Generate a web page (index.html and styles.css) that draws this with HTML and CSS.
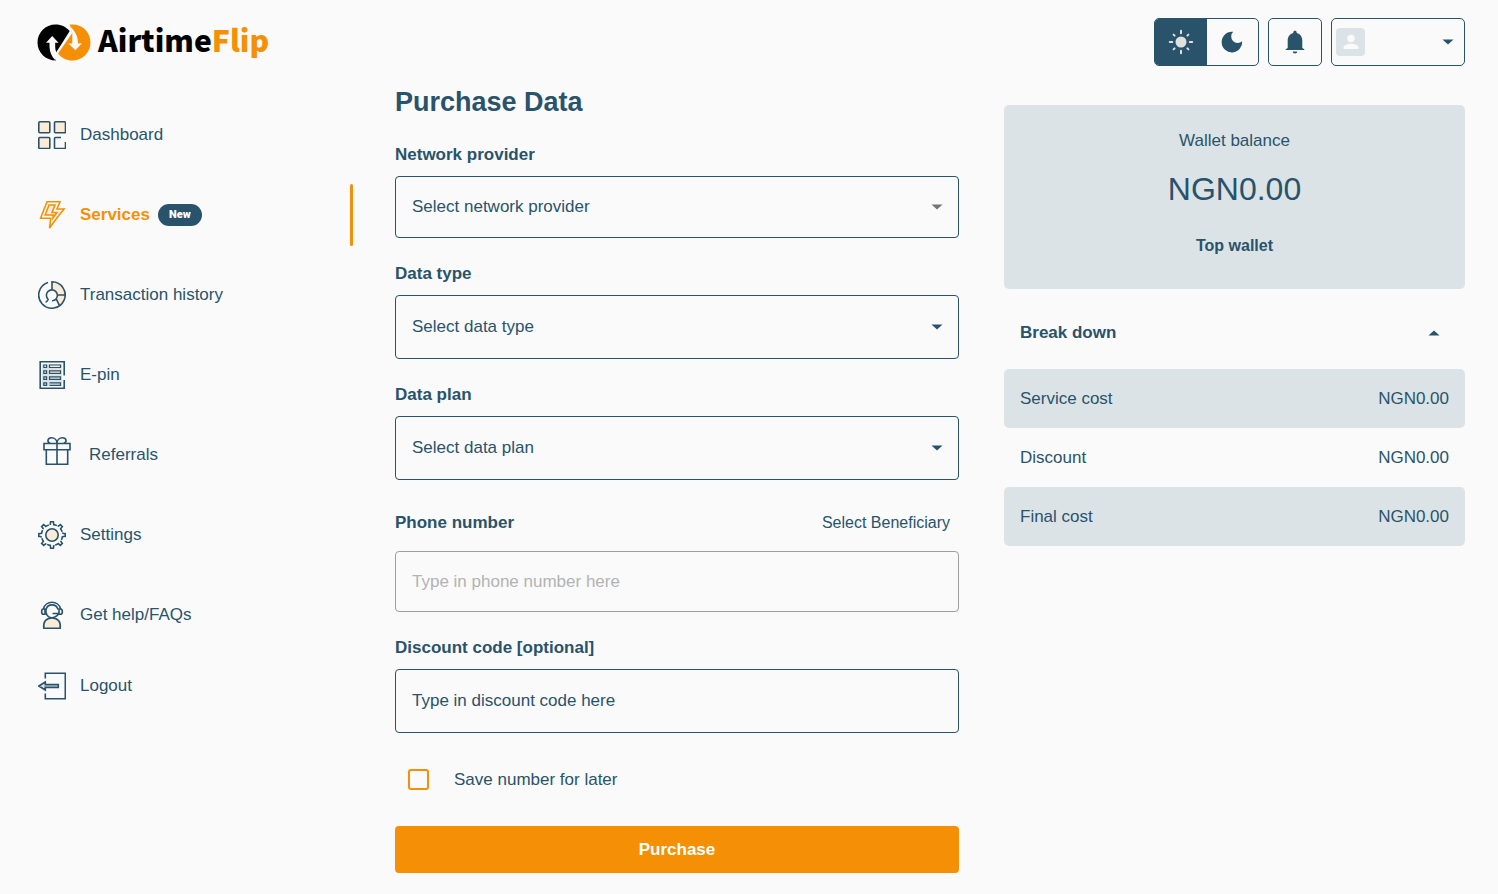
FILE: index.html
```html
<!DOCTYPE html>
<html lang="en">
<head>
    <meta charset="UTF-8">
    <meta name="viewport" content="width=device-width, initial-scale=1.0">
    <title>AirtimeFlip - Purchase Data</title>
    <link rel="stylesheet" href="styles.css">
</head>
<body>
    <header class="topbar">
        <a class="logo" href="#">
            <svg width="54" height="37" viewBox="0 0 54 37">
                <path fill="#000" d="M18.500 .5c6 0 11 2.600 14.200 6.600l-1.200 2L17.500 31l1.500 5.500C8.500 36.500.5 28.500.5 18.500S8.500.5 18.500.5z"/>
                <path fill="#f58f05" d="M32.500 .7c12-1.700 21 7 21 17.800 0 10-8 18-18 18-6 0-11-2.500-14.500-7L35 9.500c0-3-1-6.500-2.500-8.800z"/>
                <path fill="#fafafa" d="M15.200 12l6.300 6.800h-3.300v4c0 2.500.6 4.500 1.600 6.200L18.500 36.500c-3.800-4-5.800-8.500-6-13.500v-4.200H9zM38.300 26.300L31.500 19.500h3.800V9.500l-2-7C38 7 41 12 41 19.500h3.800z"/>
            </svg>
            <span class="logo-text">Airtime<span class="logo-accent">Flip</span></span>
        </a>
        <div class="tools">
            <div class="theme-toggle">
                <button class="theme-btn selected" type="button" aria-label="Light mode">
                    <svg width="26" height="26" viewBox="0 0 26 26" stroke="#e0e0e0" stroke-width="2" stroke-linecap="round">
                        <circle cx="13" cy="13" r="5.500" fill="#e0e0e0" stroke="none"/>
                        <path d="M13 1.800v2.400M13 21.800v2.400M1.800 13h2.400M21.800 13h2.400M5.600 5.600l1 1M19.400 19.400l1 1M5.600 20.400l1-1M19.400 6.600l1-1"/>
                    </svg>
                </button>
                <button class="theme-btn" type="button" aria-label="Dark mode">
                    <svg width="26" height="26" viewBox="0 0 26 26">
                        <path fill="#29536b" d="M12.800 2.800A10.300 10.300 0 1 0 23.200 12.200A6.200 6.200 0 1 1 14.200 2.800z"/>
                    </svg>
                </button>
            </div>
            <button class="icon-btn" type="button" aria-label="Notifications">
                <svg width="26" height="26" viewBox="0 0 26 26">
                    <path fill="#29536b" d="M13 24.500c1.300 0 2.300-.9 2.300-2h-4.600c0 1.100 1 2 2.300 2zM20.300 19v-7.500c0-3.700-2-6.600-5.600-7.500v-.6c0-1-.7-1.700-1.700-1.700s-1.700.7-1.700 1.700V4c-3.600.9-5.600 3.800-5.600 7.500V19l-2 1.200v.8h18.600v-.8z"/>
                </svg>
            </button>
            <button class="user-btn" type="button" aria-label="Account">
                <span class="avatar">
                    <svg width="16" height="16" viewBox="0 0 16 16" fill="#fafafa">
                        <circle cx="8" cy="4.500" r="3.700"/>
                        <path d="M.5 15v-1.500c0-2.500 5-3.700 7.500-3.700s7.500 1.200 7.500 3.700V15z"/>
                    </svg>
                </span>
                <svg class="caret" width="12" height="6" viewBox="0 0 12 6"><path d="M.5 .4h11L6 5.600z"/></svg>
            </button>
        </div>
    </header>

    <div class="layout">
        <!-- Sidebar -->
        <nav class="sidebar">
            <a class="nav-item" href="#">
                <svg class="nav-icon" width="28" height="28" viewBox="0 0 28 28">
                    <g fill="#fcebd7">
                        <rect x=".8" y=".8" width="11" height="11" rx="1"/>
                        <rect x="16.500" y=".8" width="11" height="11" rx="1"/>
                        <rect x=".8" y="16.500" width="11" height="11" rx="1"/>
                    </g>
                    <path d="M23 16.500h-5.500a1 1 0 0 0-1 1v9a1 1 0 0 0 1 1h9a1 1 0 0 0 1-1V21"/>
                </svg>
                Dashboard
            </a>
            <a class="nav-item active" href="#">
                <svg class="nav-icon" width="28" height="28" viewBox="0 0 28 28">
                    <path d="M20 15.500L11.500 27l1.300-9.700H2.600L9 .8h13l-3 7.200h7l-6 7.500"/>
                    <path fill="#fcebd7" d="M11 4h6l-3 7.500h5l-4 5.500.3-3H7.200z"/>
                </svg>
                Services
                <span class="badge">New</span>
            </a>
            <a class="nav-item" href="#">
                <svg class="nav-icon" width="28" height="28" viewBox="0 0 28 28">
                    <path fill="#fcebd7" stroke="none" d="M14 .8A13.200 13.200 0 0 1 21 25.200L17.300 18.500 19.500 14 14 8.500z"/>
                    <path d="M10 1.400A13.200 13.200 0 1 0 14 .8V8.500M19.500 14h7.700M18.500 18.300l3 6.400M8 21.500c0-1.500 2.500-1.500 2-3.300A5.500 5.500 0 1 1 18 18c-1 1.200-2 1.800-4 1.700"/>
                </svg>
                Transaction history
            </a>
            <a class="nav-item" href="#">
                <svg class="nav-icon" width="28" height="28" viewBox="0 0 28 28">
                    <path fill="#dbe2e5" stroke="none" d="M4 3h20v22H4z"/>
                    <path d="M26.200 14.500V.8h-24v26.400h24V19"/>
                    <g stroke-width="1.200">
                        <path fill="#fcebd7" d="M5.800 4h2.800v2.500H5.800zM11.500 4h11v2.500h-11zM5.800 9.800h2.800v2.500H5.800zM11.500 9.800h11v2.500h-11z"/>
                        <path d="M5.800 15.800h2.800v2.500H5.800zM11.500 15.800h11v2.500h-11zM5.800 21.800h2.800v2.500H5.800zM11.500 24.300h11v-2.500h-11"/>
                    </g>
                </svg>
                E-pin
            </a>
            <a class="nav-item" href="#">
                <svg class="nav-icon" width="37" height="37" viewBox="0 0 37 37">
                    <path d="M6 6.500h26v6.300H6zM8.300 12.800v14.400h21.400V12.800M19 6.500v20.700M19 6.500h-6.500C8.500 5 9.500.8 13.500.8c3.500 0 5.500 2.700 5.500 5.700zM19 6.500h6.500c4-1.500 3-5.700-1-5.700-3.500 0-5.500 2.700-5.500 5.700z"/>
                </svg>
                Referrals
            </a>
            <a class="nav-item" href="#">
                <svg class="nav-icon" width="28" height="28" viewBox="0 0 28 28">
                    <path id="tooth" d="M11.500 3.500l.8-.4.300-2.300h2.800l.3 2.800c1.400.2 2.400.6 3.200 1"/>
                    <use href="#tooth" transform="rotate(45 14 14)"/>
                    <use href="#tooth" transform="rotate(90 14 14)"/>
                    <use href="#tooth" transform="rotate(135 14 14)"/>
                    <use href="#tooth" transform="rotate(180 14 14)"/>
                    <use href="#tooth" transform="rotate(225 14 14)"/>
                    <use href="#tooth" transform="rotate(270 14 14)"/>
                    <use href="#tooth" transform="rotate(315 14 14)"/>
                    <circle cx="14" cy="14" r="6.200" fill="#fcebd7"/>
                </svg>
                Settings
            </a>
            <a class="nav-item" href="#">
                <svg class="nav-icon" width="28" height="28" viewBox="0 0 28 28">
                    <path d="M5.300 8A9 9 0 0 1 22.700 8M8 8.500a6.200 6.200 0 0 1 12 0M8 8.500c-.8 4 1.500 8.200 6 8.200 3.500 0 6-2.500 6.300-4.200H14.500"/>
                    <path fill="#fcebd7" d="M7 8H5.500C3 8 3 13.300 5.500 13.300H7zM21 8h1.500c2.500 0 2.500 5.300 0 5.300H21zM5.800 27.200c-.8-6 2-10.200 8.200-10.200s9 4.200 8.200 10.200z"/>
                </svg>
                Get help/FAQs
            </a>
            <a class="nav-item logout" href="#">
                <svg class="nav-icon" width="28" height="28" viewBox="0 0 28 28">
                    <path d="M7.300 6.500V1.300h20v25.500h-20v-5.300"/>
                    <path fill="#dbe2e5" d="M.8 14l6.500-4v2.600h13v2.800h-13V18z"/>
                </svg>
                Logout
            </a>
        </nav>

        <!-- Purchase form -->
        <main class="content">
            <form class="purchase-form">
                <h1 class="title">Purchase Data</h1>
                <div class="field">
                    <label for="network">Network provider</label>
                    <div class="select-box">
                        <select class="control" id="network">
                            <option>Select network provider</option>
                        </select>
                        <svg class="caret muted" width="12" height="6" viewBox="0 0 12 6"><path d="M.5 .4h11L6 5.600z"/></svg>
                    </div>
                </div>
                <div class="field">
                    <label for="data-type">Data type</label>
                    <div class="select-box">
                        <select class="control tall" id="data-type">
                            <option>Select data type</option>
                        </select>
                        <svg class="caret" width="12" height="6" viewBox="0 0 12 6"><path d="M.5 .4h11L6 5.600z"/></svg>
                    </div>
                </div>
                <div class="field">
                    <label for="data-plan">Data plan</label>
                    <div class="select-box">
                        <select class="control tall" id="data-plan">
                            <option>Select data plan</option>
                        </select>
                        <svg class="caret" width="12" height="6" viewBox="0 0 12 6"><path d="M.5 .4h11L6 5.600z"/></svg>
                    </div>
                </div>
                <div class="field">
                    <div class="label-row">
                        <label for="phone">Phone number</label>
                        <button class="text-btn" type="button">Select Beneficiary</button>
                    </div>
                    <input class="control phone" id="phone" type="tel" placeholder="Type in phone number here">
                </div>
                <div class="field">
                    <label for="discount">Discount code [optional]</label>
                    <input class="control tall" id="discount" type="text" placeholder="Type in discount code here">
                </div>
                <label class="save-row">
                    <input class="checkbox" type="checkbox">
                    Save number for later
                </label>
                <button class="submit-btn" type="submit">Purchase</button>
            </form>
        </main>

        <!-- Wallet and cost summary -->
        <aside class="summary">
            <section class="wallet">
                <p class="wallet-label">Wallet balance</p>
                <p class="wallet-amount">NGN0.00</p>
                <button class="wallet-btn" type="button">Top wallet</button>
            </section>
            <button class="breakdown-toggle" type="button" aria-expanded="true">
                Break down
                <svg class="caret" width="12" height="6" viewBox="0 0 12 6"><path d="M.5 5.600h11L6 .4z"/></svg>
            </button>
            <table class="costs">
                <tr>
                    <th>Service cost</th>
                    <td>NGN0.00</td>
                </tr>
                <tr>
                    <th>Discount</th>
                    <td>NGN0.00</td>
                </tr>
                <tr>
                    <th>Final cost</th>
                    <td>NGN0.00</td>
                </tr>
            </table>
        </aside>
    </div>
</body>
</html>
```

FILE: styles.css
```css
* {
    box-sizing: border-box;
}
body {
    margin: 0;
    background-color: #fafafa;
    color: #29536b;
    font-family: "Liberation Sans", Arial, sans-serif;
    font-size: 17px;
    line-height: 24px;
}
button, input, select {
    font: inherit;
    color: inherit;
}
button {
    padding: 0;
    border: none;
    background: none;
    cursor: pointer;
}
a {
    color: inherit;
    text-decoration: none;
}
svg {
    display: block;
    flex-shrink: 0;
}

/* Top bar */
.topbar {
    display: flex;
    justify-content: space-between;
    align-items: flex-start;
    height: 80px;
    padding: 18px 33px 0 37px;
}
.logo {
    display: flex;
    align-items: center;
    gap: 7px;
    height: 48px;
    color: #000;
}
.logo-text {
    padding-bottom: 5px;
    font-family: "Noto Sans CJK SC", "Open Sans", sans-serif;
    font-size: 30px;
    font-weight: 900;
    line-height: 43px;
}
.logo-accent {
    color: #f58f05;
}
.tools {
    display: flex;
    gap: 9px;
}
.theme-toggle, .icon-btn, .user-btn {
    height: 48px;
    border: 1px solid #29536b;
    border-radius: 5px;
}
.theme-toggle {
    display: flex;
    width: 105px;
    overflow: hidden;
}
.theme-btn, .icon-btn {
    display: flex;
    align-items: center;
    justify-content: center;
}
.theme-btn {
    flex: 1;
}
.theme-btn.selected {
    background-color: #29536b;
}
.icon-btn {
    width: 54px;
}
.user-btn {
    display: flex;
    align-items: center;
    justify-content: space-between;
    width: 134px;
    padding: 0 10px 0 4px;
}
.avatar {
    display: flex;
    align-items: center;
    justify-content: center;
    width: 29px;
    height: 28px;
    border-radius: 4px;
    background-color: #dce3e6;
}
.caret {
    fill: #29536b;
}
.caret.muted {
    fill: #757575;
}

/* Page columns */
.layout {
    display: flex;
    align-items: flex-start;
    padding-right: 33px;
}
.content {
    flex: 564;
    margin: 0 45px 0 42px;
    padding-bottom: 21px;
}
.summary {
    flex: 461;
    padding-top: 25px;
}

/* Sidebar */
.sidebar {
    display: flex;
    flex-direction: column;
    flex-shrink: 0;
    gap: 18px;
    width: 353px;
    padding: 24px 0 0 38px;
}
.nav-item {
    display: flex;
    align-items: center;
    height: 62px;
}
.nav-icon {
    margin-right: 14px;
    fill: none;
    stroke: #29536b;
    stroke-width: 1.6px;
}
.nav-item.active {
    color: #f58f05;
    font-weight: bold;
}
.nav-item.active .nav-icon {
    stroke: #f58f05;
}
.nav-item.active::after {
    content: "";
    width: 3px;
    height: 62px;
    margin-left: auto;
    border-radius: 2px;
    background-color: #f58f05;
}
.badge {
    margin-left: 8px;
    padding: 0 11px;
    border-radius: 11px;
    background-color: #29536b;
    color: #fff;
    font-family: Roboto, sans-serif;
    font-size: 11px;
    font-weight: 900;
    line-height: 22px;
}
.logout {
    margin-top: -9px;
}

/* Form */
.purchase-form {
    display: flex;
    flex-direction: column;
    gap: 23px;
}
.title {
    margin: 0 0 -5px;
    font-size: 27px;
    line-height: 44px;
}
.field {
    display: flex;
    flex-direction: column;
    gap: 8px;
}
.field label {
    font-weight: bold;
    line-height: 26px;
}
.label-row {
    display: flex;
    align-items: center;
    justify-content: space-between;
    height: 40px;
    padding-right: 9px;
}
.text-btn {
    font-size: 16px;
}
.select-box {
    position: relative;
}
.control {
    display: block;
    width: 100%;
    height: 62px;
    padding: 0 16px;
    border: 1px solid #29536b;
    border-radius: 4px;
    background: none;
    appearance: none;
}
.control.tall {
    height: 64px;
}
.control.phone {
    height: 61px;
    border-color: #9e9e9e;
}
.control::placeholder {
    color: #29536b;
    opacity: 1;
}
.control.phone::placeholder {
    color: #b3b3b3;
}
.select-box .caret {
    position: absolute;
    top: 50%;
    right: 16px;
    margin-top: -3px;
    pointer-events: none;
}
.save-row {
    display: flex;
    align-items: center;
    gap: 25px;
    height: 47px;
    padding-left: 13px;
}
.checkbox {
    width: 21px;
    height: 21px;
    margin: 0;
    border: 2px solid #f58f05;
    border-radius: 3px;
    appearance: none;
}
.checkbox:checked {
    background-color: #f58f05;
}
.submit-btn {
    height: 47px;
    border-radius: 4px;
    background-color: #f58f05;
    color: #fff;
    font-weight: bold;
}

/* Wallet */
.wallet {
    display: flex;
    flex-direction: column;
    align-items: center;
    padding: 24px 16px 31px;
    border-radius: 5px;
    background-color: #dce3e6;
}
.wallet p {
    margin: 0;
}
.wallet .wallet-amount {
    margin: 16px 0 24px;
    font-size: 32px;
    line-height: 41px;
}
.wallet-btn {
    font-size: 16px;
    font-weight: bold;
    line-height: 24px;
}
.breakdown-toggle {
    display: flex;
    align-items: center;
    justify-content: space-between;
    width: 100%;
    height: 80px;
    padding: 7px 25px 0 16px;
    font-weight: bold;
}
.costs {
    width: 100%;
    border-spacing: 0;
}
.costs th, .costs td {
    height: 59px;
    padding: 0 16px;
    font-weight: normal;
}
.costs th {
    text-align: left;
    border-radius: 5px 0 0 5px;
}
.costs td {
    text-align: right;
    border-radius: 0 5px 5px 0;
}
.costs tr:nth-child(odd) > * {
    background-color: #dce3e6;
}

@media (max-width: 1000px) {
    .layout {
        flex-wrap: wrap;
    }
    .content {
        margin: 0 33px;
    }
    .summary {
        flex-basis: 100%;
        padding-left: 33px;
    }
}
```
